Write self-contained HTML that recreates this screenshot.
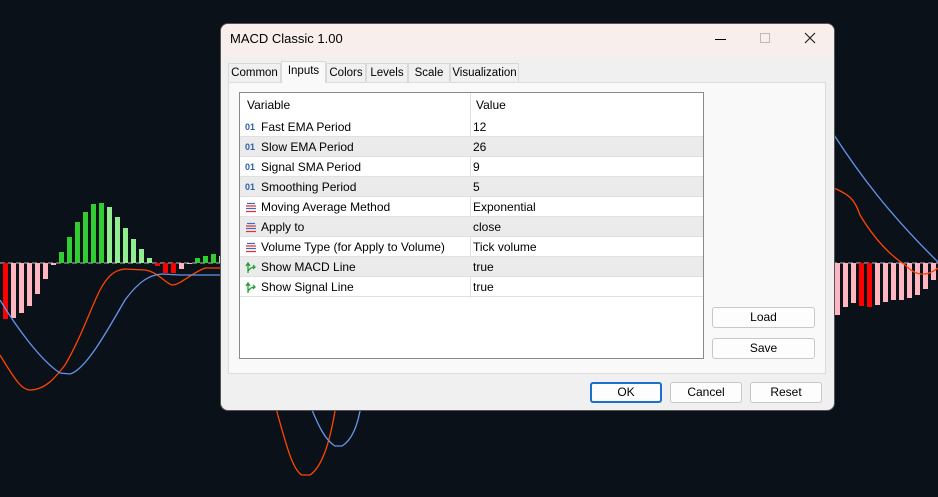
<!DOCTYPE html>
<html><head><style>
*{box-sizing:border-box;margin:0;padding:0}
body{width:938px;height:497px;background:#0b1118;position:relative;overflow:hidden;font-family:"Liberation Sans",sans-serif;font-size:12px;color:#000}
.abs{position:absolute}
#dlg{left:221px;top:24px;width:613px;height:386px;background:#f0f0f0;border-radius:7px;overflow:hidden;box-shadow:0 0 0 1px #555}
#title{left:0;top:0;width:613px;height:33px;background:#f8efec;font-size:13px;line-height:30px;padding-left:9px}
.tab{top:39px;height:20px;line-height:19px;border:1px solid #d9d9d9;border-bottom:none;background:#f0f0f0;font-size:11.5px;text-align:center;white-space:nowrap}
#panel{left:7px;top:58px;width:598px;height:292px;background:#f9f9f9;border:1px solid #dcdcdc}
#tbl{left:18px;top:68px;width:465px;height:267px;background:#fff;border:1px solid #8a8a8a}
.row{position:absolute;left:0;width:463px;height:20px;line-height:21px;border-bottom:1px solid #e0e0e0}
.row .n{position:absolute;left:21px}
.row .v{position:absolute;left:233px}
.row .ic{position:absolute;left:5px;top:4px;width:12px;height:13px;font-size:9px;color:#2a5ea8;font-weight:bold;line-height:13px}
.g{background:#ebebeb}
.btn{height:21px;border:1px solid #c8c8c8;background:#fdfdfd;border-radius:3px;text-align:center;line-height:19px}
</style></head><body>
<svg class="abs" style="left:0;top:0" width="938" height="497">
<line x1="0" y1="263" x2="938" y2="263" stroke="#bbb" stroke-dasharray="5,3" stroke-width="1"/>
<g>
<rect x="3" y="263" width="5" height="56" fill="#f00"/>
<rect x="11" y="263" width="5" height="55" fill="#ffb6c1"/>
<rect x="19" y="263" width="5" height="50" fill="#ffb6c1"/>
<rect x="27" y="263" width="5" height="43" fill="#ffb6c1"/>
<rect x="35" y="263" width="5" height="31" fill="#ffb6c1"/>
<rect x="43" y="263" width="5" height="16" fill="#ffb6c1"/>
<rect x="51" y="263" width="5" height="2" fill="#ffb6c1"/>
<rect x="59" y="252" width="5" height="11" fill="#32cd32"/>
<rect x="67" y="237" width="5" height="26" fill="#32cd32"/>
<rect x="75" y="222" width="5" height="41" fill="#32cd32"/>
<rect x="83" y="212" width="5" height="51" fill="#32cd32"/>
<rect x="91" y="204" width="5" height="59" fill="#32cd32"/>
<rect x="99" y="203" width="5" height="60" fill="#32cd32"/>
<rect x="107" y="207" width="5" height="56" fill="#90ee90"/>
<rect x="115" y="217" width="5" height="46" fill="#90ee90"/>
<rect x="123" y="228" width="5" height="35" fill="#90ee90"/>
<rect x="131" y="239" width="5" height="24" fill="#90ee90"/>
<rect x="139" y="249" width="5" height="14" fill="#90ee90"/>
<rect x="147" y="258" width="5" height="5" fill="#90ee90"/>
<rect x="155" y="263" width="5" height="3" fill="#f00"/>
<rect x="163" y="263" width="5" height="10" fill="#f00"/>
<rect x="171" y="263" width="5" height="10" fill="#f00"/>
<rect x="179" y="263" width="5" height="6" fill="#ffb6c1"/>
<rect x="187" y="263" width="5" height="1" fill="#ffb6c1"/>
<rect x="195" y="258" width="5" height="5" fill="#32cd32"/>
<rect x="203" y="256" width="5" height="7" fill="#32cd32"/>
<rect x="211" y="254" width="5" height="9" fill="#32cd32"/>
<rect x="219" y="256" width="5" height="7" fill="#90ee90"/>
</g>
<g fill="#ffb6c1">
<rect x="835" y="263" width="5" height="52"/>
<rect x="843" y="263" width="5" height="44"/>
<rect x="851" y="263" width="5" height="40"/>
<rect x="859" y="263" width="5" height="43" fill="#f00"/>
<rect x="867" y="263" width="5" height="44" fill="#f00"/>
<rect x="875" y="263" width="5" height="42"/>
<rect x="883" y="263" width="5" height="39"/>
<rect x="891" y="263" width="5" height="37"/>
<rect x="899" y="263" width="5" height="37"/>
<rect x="907" y="263" width="5" height="35"/>
<rect x="915" y="263" width="5" height="32"/>
<rect x="923" y="263" width="5" height="26"/>
<rect x="931" y="263" width="5" height="17"/>
</g>
<path d="M0,355 C15,380 22,390 30,390 C45,390 55,378 65,365 C80,340 90,310 100,290 C108,275 115,270 125,269 L145,270 C158,272 165,283 172,285 C180,285 190,274 205,268 L222,268" fill="none" stroke="#ff4500" stroke-width="1.3"/>
<path d="M0,300 C15,325 40,360 60,373 L70,374 C85,370 105,335 125,300 C140,280 150,275 162,274 L180,275 L222,275" fill="none" stroke="#6495ed" stroke-width="1.3"/>
<path d="M275,405 C285,440 292,470 302,475 L310,475 C325,465 332,430 336,405" fill="none" stroke="#ff4500" stroke-width="1.3"/>
<path d="M310,405 C318,425 325,440 335,446 L342,446 C352,440 358,425 361,405" fill="none" stroke="#6495ed" stroke-width="1.3"/>
<path d="M834,135 C860,175 890,215 938,262" fill="none" stroke="#6495ed" stroke-width="1.3"/>
<path d="M834,188 C850,195 855,200 860,215 C875,240 890,255 905,265 C915,275 925,278 938,268" fill="none" stroke="#ff4500" stroke-width="1.3"/>
</svg>
<div id="dlg" class="abs">
<div id="title" class="abs">MACD Classic 1.00
<span class="abs" style="left:494px;top:15px;width:11px;height:1px;background:#000"></span>
<span class="abs" style="left:539px;top:9px;width:10px;height:10px;border:1px solid #bbb"></span>
<svg class="abs" style="left:583px;top:8px" width="12" height="12"><path d="M1,1L11,11M11,1L1,11" stroke="#222" stroke-width="1.2"/></svg>
</div>
<div class="tab abs" style="left:7px;width:53px">Common</div>
<div class="tab abs" style="left:60px;width:45px;top:37px;height:22px;background:#f9f9f9;z-index:2">Inputs</div>
<div class="tab abs" style="left:105px;width:40px">Colors</div>
<div class="tab abs" style="left:145px;width:42px">Levels</div>
<div class="tab abs" style="left:187px;width:42px">Scale</div>
<div class="tab abs" style="left:229px;width:69px">Visualization</div>
<div id="panel" class="abs"></div>
<div id="tbl" class="abs">
<div class="row" style="top:0;height:24px;line-height:24px;border-bottom:none"><span class="n" style="left:7px">Variable</span><span class="v" style="left:236px">Value</span></div>
<div class="abs" style="left:230px;top:0;width:1px;height:205px;background:#e0e0e0"></div>
<div class="row" style="top:24px"><span class="ic">01</span><span class="n">Fast EMA Period</span><span class="v">12</span></div>
<div class="row g" style="top:44px"><span class="ic">01</span><span class="n">Slow EMA Period</span><span class="v">26</span></div>
<div class="row" style="top:64px"><span class="ic">01</span><span class="n">Signal SMA Period</span><span class="v">9</span></div>
<div class="row g" style="top:84px"><span class="ic">01</span><span class="n">Smoothing Period</span><span class="v">5</span></div>
<div class="row" style="top:104px"><svg class="ic" viewBox="0 0 12 13"><path d="M2,2.5H10M1,7.5H11" stroke="#3a6fc4" stroke-width="1.2"/><path d="M1,5H11M1,10.5H11" stroke="#d33" stroke-width="1.2"/></svg><span class="n">Moving Average Method</span><span class="v">Exponential</span></div>
<div class="row g" style="top:124px"><svg class="ic" viewBox="0 0 12 13"><path d="M2,2.5H10M1,7.5H11" stroke="#3a6fc4" stroke-width="1.2"/><path d="M1,5H11M1,10.5H11" stroke="#d33" stroke-width="1.2"/></svg><span class="n">Apply to</span><span class="v">close</span></div>
<div class="row" style="top:144px"><svg class="ic" viewBox="0 0 12 13"><path d="M2,2.5H10M1,7.5H11" stroke="#3a6fc4" stroke-width="1.2"/><path d="M1,5H11M1,10.5H11" stroke="#d33" stroke-width="1.2"/></svg><span class="n">Volume Type (for Apply to Volume)</span><span class="v">Tick volume</span></div>
<div class="row g" style="top:164px"><svg class="ic" viewBox="0 0 12 13"><path d="M3,12V3M1,5L3,2L5,5M3,10C5,7 7,6 10,6M8,4L10,6L8,8" fill="none" stroke="#1a9a2a" stroke-width="1.2"/></svg><span class="n">Show MACD Line</span><span class="v">true</span></div>
<div class="row" style="top:184px"><svg class="ic" viewBox="0 0 12 13"><path d="M3,12V3M1,5L3,2L5,5M3,10C5,7 7,6 10,6M8,4L10,6L8,8" fill="none" stroke="#1a9a2a" stroke-width="1.2"/></svg><span class="n">Show Signal Line</span><span class="v">true</span></div>
</div>
<div class="btn abs" style="left:491px;top:283px;width:103px">Load</div>
<div class="btn abs" style="left:491px;top:314px;width:103px">Save</div>
<div class="btn abs" style="left:369px;top:358px;width:72px;border:2px solid #1b6fcf;line-height:17px">OK</div>
<div class="btn abs" style="left:449px;top:358px;width:72px">Cancel</div>
<div class="btn abs" style="left:529px;top:358px;width:72px">Reset</div>
</div>
</body></html>
